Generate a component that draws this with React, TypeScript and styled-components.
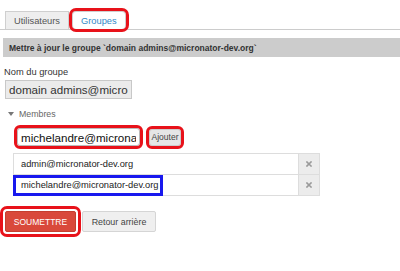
import React from 'react';
import styled, {createGlobalStyle, css} from 'styled-components';

const GlobalStyle = createGlobalStyle`
  body {
    margin: 0;
    background: #ffffff;
    font-family: 'Liberation Sans', Arial, sans-serif;
  }
`;

const mark = css`
  outline: 3px solid #e8121a;
`;

export default function App() {
  return (
    <Page>
      <GlobalStyle />

      <TabBar>
        <Tab>Utilisateurs</Tab>
        <Tab $active $highlight>
          Groupes
        </Tab>
      </TabBar>

      <PanelTitle>
        Mettre à jour le groupe `domain admins@micronator-dev.org`
      </PanelTitle>

      <FieldLabel>Nom du groupe</FieldLabel>
      <NameInput readOnly value='domain admins@micronator-dev.org' />

      <SectionToggle>
        <svg width='6' height='4' viewBox='0 0 6 4'>
          <path d='M0 0 L6 0 L3 4 Z' fill='#777' />
        </svg>
        Membres
      </SectionToggle>

      <AddRow>
        <MemberInput readOnly value='michelandre@micronator-dev.org' />
        <SmallButton>Ajouter</SmallButton>
      </AddRow>

      <MemberList>
        <MemberRow member='admin@micronator-dev.org' />
        <MemberRow member='michelandre@micronator-dev.org' selected />
      </MemberList>

      <Actions>
        <PrimaryButton>Soumettre</PrimaryButton>
        <SecondaryButton>Retour arrière</SecondaryButton>
      </Actions>
    </Page>
  );
}

const MemberRow = ({member, selected}: {member: string; selected?: boolean}) => {
  return (
    <Row>
      <MemberCell $selected={selected}>
        {selected ? <Selected>{member}</Selected> : member}
      </MemberCell>
      <RemoveCell>
        <svg width='6' height='6' viewBox='0 0 6 6'>
          <path
            d='M1 1 L5 5 M5 1 L1 5'
            stroke='#9a9a9a'
            strokeWidth='1.6'
            strokeLinecap='square'
          />
        </svg>
      </RemoveCell>
    </Row>
  );
};

const Page = styled.div`
  width: 400px;
  height: 271px;
  overflow: hidden;
`;

const TabBar = styled.div`
  display: flex;
  align-items: flex-end;
  gap: 3px;
  padding: 11px 0 0 5px;
  border-bottom: 1px solid #cccccc;
`;

const Tab = styled.div<{$active?: boolean; $highlight?: boolean}>`
  height: 17px;
  display: flex;
  align-items: center;
  padding: 0 8px;
  border: 1px solid #cfcfcf;
  border-bottom: none;
  border-radius: ${(p) => (p.$highlight ? '4px' : '0')};
  background: ${(p) => (p.$active ? '#ffffff' : '#eeeeee')};
  color: ${(p) => (p.$active ? '#3289c7' : '#555555')};
  font-size: 9.3px;
  ${(p) => p.$highlight && mark}
`;

const PanelTitle = styled.div`
  margin: 8px 0 0 3px;
  height: 19px;
  display: flex;
  align-items: center;
  padding-left: 6px;
  background: #cccccc;
  color: #333333;
  font-size: 8.5px;
  font-weight: 700;
`;

const FieldLabel = styled.div`
  margin: 10px 0 0 4px;
  line-height: 11px;
  font-size: 9.3px;
  color: #333333;
`;

const NameInput = styled.input`
  display: block;
  box-sizing: border-box;
  margin: 2px 0 0 5px;
  width: 127px;
  height: 19px;
  padding: 0 3px;
  background: #ebebeb;
  border: 1px solid #c8c8c8;
  color: #333333;
  font-family: inherit;
  font-size: 11.6px;
  outline: none;
`;

const SectionToggle = styled.div`
  display: flex;
  align-items: center;
  gap: 5px;
  margin: 10px 0 0 8px;
  line-height: 10px;
  font-size: 8.8px;
  color: #666666;
`;

const AddRow = styled.div`
  display: flex;
  align-items: center;
  gap: 9px;
  margin: 9px 0 0 17px;
`;

const MemberInput = styled.input`
  box-sizing: border-box;
  width: 123px;
  height: 18px;
  padding: 0 3px;
  border: 1px solid #bbbbbb;
  border-radius: 3px;
  background: #ffffff;
  color: #111111;
  font-family: inherit;
  font-size: 11.6px;
  ${mark}
`;

const SmallButton = styled.button`
  box-sizing: border-box;
  width: 32px;
  height: 17px;
  padding: 0;
  border: 1px solid #cccccc;
  border-radius: 3px;
  background: #e6e6e6;
  color: #444444;
  font-family: inherit;
  font-size: 8.5px;
  ${mark}
`;

const MemberList = styled.div`
  margin: 7px 0 0 13px;
  width: 305px;
  border: 1px solid #dddddd;
  border-top: none;
`;

const Row = styled.div`
  display: grid;
  grid-template-columns: 1fr 21px;
  height: 20px;
  border-top: 1px solid #dddddd;
`;

const MemberCell = styled.div<{$selected?: boolean}>`
  display: flex;
  align-items: center;
  padding-left: ${(p) => (p.$selected ? '2px' : '7px')};
  color: #222222;
  font-size: 9.3px;
`;

const Selected = styled.span`
  display: flex;
  align-items: center;
  height: 15px;
  padding: 0 2px 0 5px;
  outline: 3px solid #1818ee;
`;

const RemoveCell = styled.div`
  display: flex;
  align-items: center;
  justify-content: center;
  background: #ececec;
  border-left: 1px solid #dddddd;
`;

const Actions = styled.div`
  display: flex;
  gap: 6px;
  margin: 15px 0 0 5px;
`;

const PrimaryButton = styled.button`
  box-sizing: border-box;
  width: 71px;
  height: 21px;
  padding: 0;
  border: 1px solid #c53f30;
  border-radius: 2px;
  background: #d9493b;
  color: #ffffff;
  font-family: inherit;
  font-size: 8.5px;
  text-transform: uppercase;
  ${mark}
  outline-offset: 2px;
`;

const SecondaryButton = styled.button`
  box-sizing: border-box;
  width: 74px;
  height: 21px;
  padding: 0;
  border: 1px solid #d5d5d5;
  border-radius: 2px;
  background: #efefef;
  color: #444444;
  font-family: inherit;
  font-size: 8.9px;
`;
